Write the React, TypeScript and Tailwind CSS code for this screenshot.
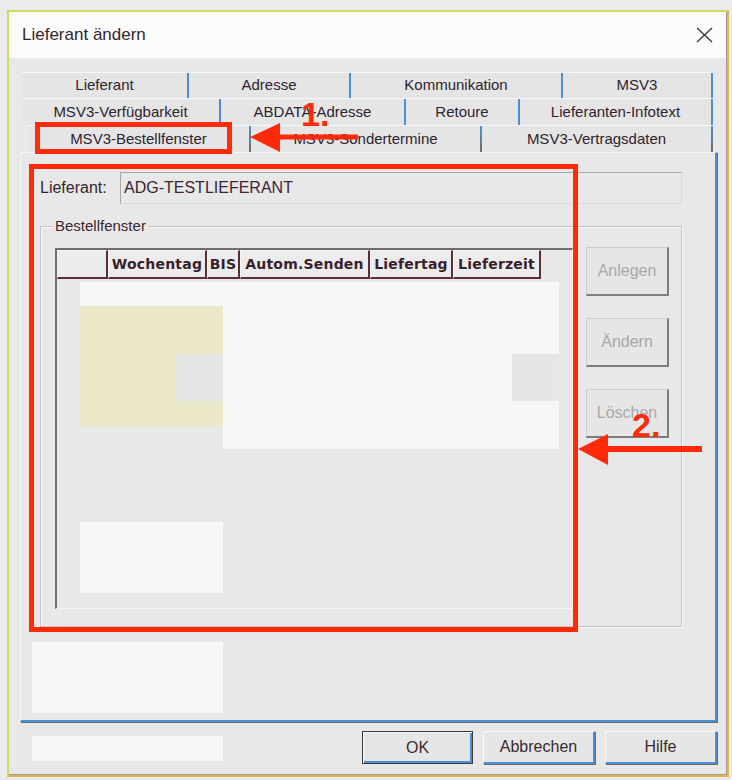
import React from "react";

const tabRows: { pl: string; tabs: { label: string; w: string }[]; sep: string }[] = [
  {
    pl: "pl-[2px]",
    sep: "bg-[#4a8fd6]",
    tabs: [
      { label: "Lieferant", w: "w-[167px]" },
      { label: "Adresse", w: "w-[162px]" },
      { label: "Kommunikation", w: "w-[212px]" },
      { label: "MSV3", w: "w-[150px]" },
    ],
  },
  {
    pl: "pl-[2px]",
    sep: "bg-[#4a8fd6]",
    tabs: [
      { label: "MSV3-Verfügbarkeit", w: "w-[199px]" },
      { label: "ABDATA-Adresse", w: "w-[185px]" },
      { label: "Retoure", w: "w-[114px]" },
      { label: "Lieferanten-Infotext", w: "w-[193px]" },
    ],
  },
  {
    pl: "pl-[8px]",
    sep: "bg-linear-to-b from-[#4a8fd6] to-[#6a6a6a]",
    tabs: [
      { label: "MSV3-Bestellfenster", w: "w-[223px]" },
      { label: "MSV3-Sondertermine", w: "w-[231px]" },
      { label: "MSV3-Vertragsdaten", w: "w-[231px]" },
    ],
  },
];

const headers: { label: string; w: string }[] = [
  { label: "", w: "w-[51px]" },
  { label: "Wochentag", w: "w-[99px]" },
  { label: "BIS", w: "w-[33px]" },
  { label: "Autom.Senden", w: "w-[130px]" },
  { label: "Liefertag", w: "w-[83px]" },
  { label: "Lieferzeit", w: "w-[88px]" },
];

function SideButton({ label }: { label: string }) {
  return (
    <div className="w-[83px] h-[49px] flex items-center justify-center bg-[#e6e6e6] border-l border-t border-r-2 border-b-2 border-l-[#cdcdcd] border-t-[#cdcdcd] border-r-[#7c7c7c] border-b-[#7c7c7c] text-[16px] text-[#a8a8a8]">
      {label}
    </div>
  );
}

function DlgButton({ label, def }: { label: string; def?: boolean }) {
  return def ? (
    <div className="w-[111px] h-[33px] flex items-center justify-center bg-[#e6e6e6] border border-[#3a3a3a] shadow-[inset_1px_1px_0_#fafafa,inset_-2px_-2px_0_#4a90d6] text-[16px] text-[#3a2a30]">
      {label}
    </div>
  ) : (
    <div className="w-[112px] h-[33px] flex items-center justify-center bg-[#e6e6e6] border-l border-t border-r-2 border-b-2 border-l-[#fafafa] border-t-[#fafafa] border-r-[#4a90d6] border-b-[#4a90d6] shadow-[1px_1px_0_#6a6a6a] text-[16px] text-[#3a2a30]">
      {label}
    </div>
  );
}

export default function App() {
  return (
    <div className="relative w-[732px] h-[780px] overflow-hidden bg-[#ebebeb] pt-[10px] pl-[7px] font-['Liberation_Sans',Arial,sans-serif] text-[#2e2430]">
      <div className="w-[722px] h-[767px] flex flex-col border-2 border-l-[#cfd95e] border-t-[#cfd95e] border-r-[#e3b450] border-b-[#e3b450]">
        <div className="flex-1 flex flex-col border-r border-b border-[#9c9c9c]">
          {/* Title bar */}
          <div className="h-[46px] bg-[#fcfcfc] flex items-center justify-between pl-[13px] pr-[13px]">
            <span className="text-[17px] text-[#33262e]">Lieferant ändern</span>
            <svg width="17" height="16" viewBox="0 0 17 16">
              <path d="M1 1 L16 15 M16 1 L1 15" stroke="#3a3a3a" strokeWidth="1.4" fill="none" />
            </svg>
          </div>

          {/* Client */}
          <div className="flex-1 bg-[#e8e8e8] flex flex-col">
            <div className="mt-[14px] ml-[11px] w-[697px] flex flex-col">
              {tabRows.map((row, ri) => (
                <div key={ri} className={`flex ${row.pl} ${ri === 0 ? "h-[26px]" : "h-[27px]"}`}>
                  {row.tabs.map((t) => (
                    <div key={t.label} className={`${t.w} h-full flex bg-[#e5e5e5] border-t border-[#f8f8f8]`}>
                      <div className="flex-1 flex items-center justify-center text-[15px] text-[#2e2430]">
                        {t.label}
                      </div>
                      <div className={`w-[2px] h-full ${row.sep}`} />
                    </div>
                  ))}
                </div>
              ))}

              {/* Panel */}
              <div className="h-[570px] bg-[#e8e8e8] border-l border-t border-[#f6f6f6] border-r-2 border-b-2 border-r-[#4a90d6] border-b-[#4a90d6] shadow-[1px_1px_0_#6d6d6d] flex flex-col">
                <div className="flex items-center mt-[19px] ml-[19px]">
                  <div className="w-[80px] text-[16px] text-[#33262e]">Lieferant:</div>
                  <div className="w-[562px] h-[32px] flex items-center pl-[3px] border-l border-t border-r border-b border-l-[#a9a9a9] border-t-[#a9a9a9] border-r-[#d9d9d9] border-b-[#d9d9d9] text-[16px] text-[#3b2530]">
                    ADG-TESTLIEFERANT
                  </div>
                </div>

                {/* Group box */}
                <div className="relative mt-[22px] ml-[19px] w-[642px] h-[401px] border border-[#c4c4c4] shadow-[inset_1px_1px_0_#fafafa,1px_1px_0_#fafafa] flex items-start pt-[21px] pl-[14px] gap-[13px]">
                  <span className="absolute -top-[10px] left-[12px] px-[2px] bg-[#e8e8e8] text-[15px] leading-[18px] text-[#3b2530]">
                    Bestellfenster
                  </span>

                  {/* Grid */}
                  <div className="w-[518px] h-[361px] flex flex-col border-l-2 border-t-2 border-r border-b border-l-[#6e6e6e] border-t-[#6e6e6e] border-r-[#f6f6f6] border-b-[#f6f6f6]">
                    <div className="h-[29px] flex">
                      {headers.map((h, i) => (
                        <div
                          key={i}
                          className={`${h.w} h-full flex items-center justify-center bg-[#ececec] border-l border-t border-r-2 border-b-2 border-l-[#f5f5f5] border-t-[#f5f5f5] border-r-[#5e2c36] border-b-[#5e2c36] font-['DejaVu_Sans',Verdana,sans-serif] font-bold text-[14px] text-[#3a1e2c] tracking-[0.2px]`}
                        >
                          {h.label}
                        </div>
                      ))}
                    </div>
                    <div className="relative flex-1">
                      <div className="absolute left-[23px] top-[3px] w-[479px] h-[24px] bg-[#f7f7f7]" />
                      <div className="absolute left-[23px] top-[27px] w-[143px] h-[120px] bg-[#ebe7c9]" />
                      <div className="absolute left-[119px] top-[75px] w-[47px] h-[47px] bg-[#e6e6e6]" />
                      <div className="absolute left-[166px] top-[27px] w-[336px] h-[143px] bg-[#f7f7f7]" />
                      <div className="absolute left-[455px] top-[75px] w-[47px] h-[47px] bg-[#e6e6e6]" />
                      <div className="absolute left-[23px] top-[243px] w-[143px] h-[71px] bg-[#f7f7f7]" />
                    </div>
                  </div>

                  <div className="flex flex-col gap-[22px] -mt-[1px]">
                    <SideButton label="Anlegen" />
                    <SideButton label="Ändern" />
                    <SideButton label="Löschen" />
                  </div>
                </div>

                <div className="mt-[15px] ml-[11px] w-[191px] h-[71px] bg-[#f7f7f7]" />
              </div>
            </div>

            {/* Bottom buttons */}
            <div className="flex items-start pl-[23px] pr-[9px]">
              <div className="mt-[14px] w-[191px] h-[25px] bg-[#f7f7f7]" />
              <div className="ml-auto mt-[9px] flex gap-[10px]">
                <DlgButton label="OK" def />
                <DlgButton label="Abbrechen" />
                <DlgButton label="Hilfe" />
              </div>
            </div>
          </div>
        </div>
      </div>

      {/* Annotations */}
      <div className="absolute left-[35px] top-[122px] w-[197px] h-[32px] border-[5px] border-[#ff2a0a] pointer-events-none" />
      <div className="absolute left-[29px] top-[164px] w-[549px] h-[468px] border-[5px] border-[#ff2a0a] pointer-events-none" />
      <svg className="absolute left-0 top-0 pointer-events-none" width="732" height="780" viewBox="0 0 732 780">
        <polygon points="250,137 280,123 280,152" fill="#ff2a0a" />
        <rect x="278" y="134.5" width="80" height="5" fill="#ff2a0a" />
        <polygon points="578,449 608,434 608,465" fill="#ff2a0a" />
        <rect x="606" y="446" width="96" height="6" fill="#ff2a0a" />
      </svg>
      <div className="absolute left-[301px] top-[97px] text-[34px] leading-[34px] font-bold text-[#ff2a0a] pointer-events-none">
        1.
      </div>
      <div className="absolute left-[632px] top-[408px] text-[34px] leading-[34px] font-bold text-[#ff2a0a] pointer-events-none">
        2.
      </div>
    </div>
  );
}
